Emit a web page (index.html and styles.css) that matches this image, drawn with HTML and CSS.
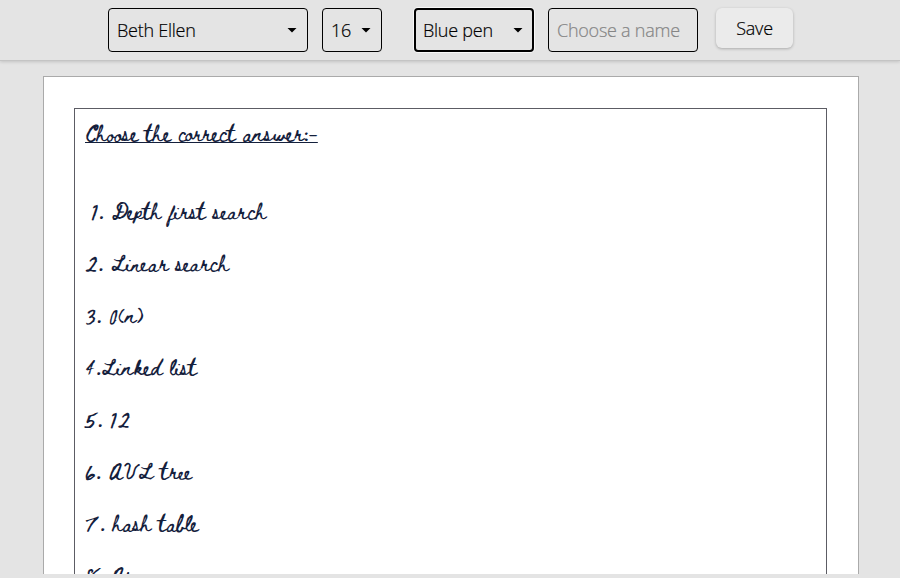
FILE: index.html
```html
<!DOCTYPE html>
<html lang="en">
<head>
<meta charset="utf-8">
<title>Handwriting</title>
<link rel="stylesheet" href="styles.css">
</head>
<body>
<header class="toolbar">
  <div class="field font">Beth Ellen<i class="arrow"></i></div>
  <div class="field size">16<i class="arrow"></i></div>
  <div class="field pen">Blue pen<i class="arrow"></i></div>
  <input class="field name" placeholder="Choose a name">
  <button class="save">Save</button>
</header>
<main class="desk">
  <div class="paper">
    <div class="sheet">
      <h1 class="title">Choose the correct answer:-</h1>
      <p class="line first">1. Depth first search</p>
      <p class="line">2. Linear search</p>
      <p class="line">3. 0(n)</p>
      <p class="line">4.Linked list</p>
      <p class="line">5. 12</p>
      <p class="line">6. AVL tree</p>
      <p class="line">7. hash table</p>
      <p class="line">8. Ar</p>
    </div>
  </div>
</main>
</body>
</html>
```
FILE: styles.css
```css
* { box-sizing: border-box; }
body { margin: 0; height: 578px; overflow: hidden; background: #e4e4e4; color: #000; font-family: "Segoe UI", "Open Sans", sans-serif; font-weight: 350; }
.toolbar { height: 61px; padding: 8px 0 0 108px; display: flex; align-items: flex-start; border-bottom: 1px solid #c4c4c4; box-shadow: 0 1px 3px rgba(0,0,0,.15); }
.field { height: 44px; border: 1px solid #000; border-radius: 4px; padding: 0 9px 0 8px; display: flex; align-items: center; justify-content: space-between; font-family: inherit; font-size: 18px; font-weight: inherit; letter-spacing: -.25px; -webkit-text-stroke: .2px; background: transparent; outline: none; }
.arrow { width: 10px; height: 5px; margin: 0 1px 0 0; background: #000; clip-path: polygon(0 0, 100% 0, 50% 100%); }
.font { width: 200px; }
.size { width: 60px; margin-left: 14px; }
.pen { width: 120px; margin-left: 32px; border-width: 2px; padding: 0 8px 0 7px; box-shadow: 0 0 0 1px #f8f8f8; }
.name { width: 150px; margin-left: 14px; }
.name::placeholder { color: #858585; opacity: 1; }
.save { width: 77px; height: 40px; margin-left: 18px; padding: 0; border: 0; border-radius: 6px; background: #ebebeb; box-shadow: 0 1px 3px rgba(0,0,0,.25); font-family: inherit; font-size: 18px; font-weight: inherit; letter-spacing: -.2px; -webkit-text-stroke: .2px; color: #000; }
.desk { height: 513px; overflow: hidden; padding: 15px 0 0 43px; }
.paper { width: 816px; height: 700px; border: 1px solid #aaa; background: #fff; padding: 31px 0 0 30px; }
.sheet { width: 753px; height: 650px; border: 1px solid #5c5c64; padding: 11px 0 0 10px; color: #14203c; font-family: "Beth Ellen", Lato, cursive; font-weight: 400; font-size: 16px; line-height: 26px; }
.title { width: max-content; margin: 0; font-size: 16px; font-weight: 400; text-decoration: underline; text-decoration-skip-ink: none; }
.line { margin: 26px 0 0; white-space: pre; }
.first { margin-top: 52px; padding-left: 6px; }
```
